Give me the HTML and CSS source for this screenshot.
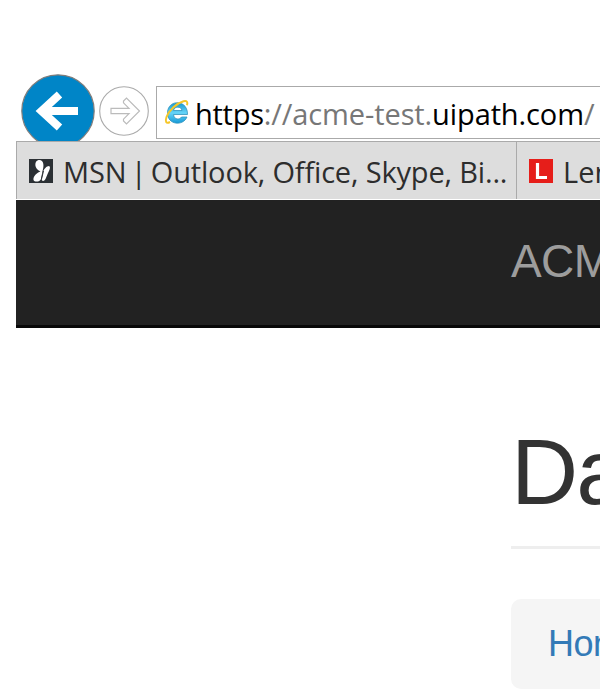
FILE: index.html
```html
<!DOCTYPE html>
<html lang="en">
<head>
<meta charset="utf-8">
<title>ACME</title>
<link rel="stylesheet" href="styles.css">
</head>
<body>
<header class="toolbar">
  <svg class="back" width="74" height="74" viewBox="0 0 74 74"><circle cx="37" cy="37" r="36.2" fill="#0085c7" stroke="#807d7b" stroke-width="1.2"/><path d="M57 37H22M38.500 20.500 20.500 37l18 16.500" fill="none" stroke="#fff" stroke-width="8"/></svg>
  <svg class="forward" width="50" height="50" viewBox="0 0 50 50"><circle cx="25" cy="25" r="24.3" fill="#fff" stroke="#aaa" stroke-width="1.1"/><path d="M12 22.3H30l-5.500-5.500V15l3-3L40.500 25 27.500 38l-3-3v-1.800L30 27.700H12Z" fill="none" stroke="#bbb" stroke-width="1.2"/></svg>
  <div class="address">
    <svg class="ie" width="26" height="27" viewBox="0 0 26 27">
      <defs><linearGradient id="blue" x2="0" y2="1"><stop stop-color="#1695cf"/><stop offset=".5" stop-color="#65d4f8"/><stop offset="1" stop-color="#1599d7"/></linearGradient></defs>
      <path d="M23.500 15.500H9.500C10 21 16 21 17.500 18h5.500C19 27.500 3.500 26 3.500 14 3.500 0 24 0 23.500 15.500ZM9.500 11.500H18C17.500 7 10 7 9.500 11.500Z" fill="url(#blue)" stroke="#3193bd" stroke-width=".8"/>
      <path d="M6 23C2 25 1 22.500 2.500 18 5 11 13 4 19.500 2.200c3.500-.9 4.500 1 3.500 4" fill="none" stroke="#f5c629" stroke-width="2"/>
    </svg>
    <span class="url"><b class="scheme">https</b><i class="host">://acme-test.</i><b class="domain">uipath.com</b><i>/</i></span>
  </div>
</header>
<nav class="favorites">
  <div class="favorite first">
    <svg width="24" height="24" viewBox="0 0 24 24"><path fill="#2b3034" d="M0 0h24v24H0z"/><path d="M11.500 12.500C5 10 5 2 9.500 1c5-.8 6 5 4 11l-1.500 8c-1 3-6.500 3.500-7.500 1-.6-3.500 3.500-7.500 7-8.500ZM14 13c1-3 3.500-6 6-6 2 1 .5 4-1 7l-2.500 6c-1.500 3-4.500 2.500-3.500-1Z" fill="#fff"/><path d="M14.500 12 12.500 20" stroke="#2b3034"/></svg>
    <span class="msn"><span class="lead">MSN | </span>Outlook, Office, Skype, Bi...</span>
  </div>
  <div class="favorite second">
    <svg width="24" height="24" viewBox="0 0 24 24"><path fill="#e61e1a" d="M0 0h24v24H0z"/><path d="M8.500 4v14.500h9.500" fill="none" stroke="#fff" stroke-width="3.200"/></svg>
    <span>Lenovo</span>
  </div>
</nav>
<div class="navbar">ACME</div>
<main>
  <h1>Dashboard</h1>
  <div class="breadcrumb"><a>Home</a></div>
</main>
</body>
</html>
```
FILE: styles.css
```css
* { box-sizing: border-box; }
body { margin: 0; width: 600px; height: 697px; overflow: hidden; background: #fff; font-family: "Liberation Sans", sans-serif; white-space: nowrap; }
svg { display: block; flex: none; }
.toolbar { display: flex; height: 141px; padding: 74px 0 0 21px; overflow: hidden; }
.forward { margin: 12px 0 0 4px; }
.address { display: flex; flex: none; width: 460px; height: 53px; margin: 12px 0 0 7px; padding-left: 7px; border: 1px solid #aaa; font-family: "Open Sans", sans-serif; }
.ie { margin-top: 12px; }
.url { margin-left: 5px; font-size: 29px; line-height: 54px; letter-spacing: -.11px; color: #777; }
.url b { color: #000; font-weight: 400; }
.url .scheme { letter-spacing: -.25px; }
.url i { font-style: normal; }
.favorites { display: flex; height: 58px; margin-left: 16px; background: #ddd; border-top: 1px solid #aaa; border-left: 1px solid #aaa; overflow: hidden; font-family: "Open Sans", sans-serif; font-size: 29px; line-height: 60px; color: #2d2d2d; }
.favorite { display: flex; flex: none; padding-left: 12px; }
.favorite svg { margin: 17px 10px 0 0; }
.first { width: 500px; border-right: 1px solid #aaa; }
.msn { letter-spacing: -.17px; }
.lead { word-spacing: -3px; }
.navbar { height: 128px; margin: 1px 0 0 16px; padding-left: 495px; background: #222; border-bottom: 3px solid #080808; color: #9d9d9d; font-size: 46px; letter-spacing: -.6px; line-height: 122px; overflow: hidden; }
main { padding: 100px 0 0 511px; overflow: hidden; }
h1 { margin: 0 0 50px; height: 121px; font-size: 93px; letter-spacing: -2px; font-weight: 400; line-height: 89px; color: #333; border-bottom: 3px solid #eee; }
.breadcrumb { width: 600px; height: 90px; padding-left: 37px; background: #f5f5f5; border-radius: 10px; font-size: 36px; letter-spacing: -.5px; line-height: 90px; color: #337ab7; }
```
